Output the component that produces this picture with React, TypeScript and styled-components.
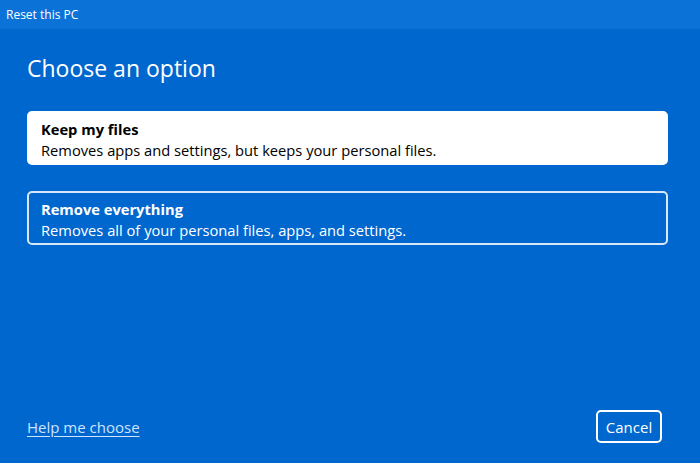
import React from 'react'
import styled, { createGlobalStyle } from 'styled-components'

const GlobalStyle = createGlobalStyle`
  html, body {
    margin: 0;
    padding: 0;
    width: 700px;
    height: 463px;
    overflow: hidden;
    background: #0067cf;
    font-family: 'Open Sans', 'Noto Sans', sans-serif;
  }
`

const Window = styled.div`
  display: flex;
  flex-direction: column;
  width: 700px;
  height: 463px;
  background: #0067cf;
  color: #ffffff;
`

const TitleBar = styled.div`
  height: 29px;
  display: flex;
  align-items: center;
  padding-left: 6px;
  background: #0b72d8;
  font-size: 12px;
`

const Content = styled.div`
  flex: 1;
  display: flex;
  flex-direction: column;
  padding: 24px 32px 20px 27px;
`

const Heading = styled.h1`
  margin: 0 0 28px;
  font-size: 23px;
  font-weight: 400;
  line-height: 30px;
`

const OptionList = styled.div`
  display: flex;
  flex-direction: column;
  gap: 26px;
`

const Option = styled.button<{ $selected?: boolean }>`
  display: flex;
  flex-direction: column;
  align-items: flex-start;
  box-sizing: border-box;
  width: 641px;
  height: 54px;
  padding: 6px 12px;
  border: 2px solid ${(p) => (p.$selected ? '#ffffff' : '#d8e8f8')};
  border-radius: 5px;
  background: ${(p) => (p.$selected ? '#ffffff' : 'transparent')};
  color: ${(p) => (p.$selected ? '#000000' : '#ffffff')};
  font-family: inherit;
  text-align: left;
  cursor: pointer;
`

const OptionTitle = styled.span`
  font-size: 14.7px;
  font-weight: 700;
  line-height: 20px;
`

const OptionText = styled.span`
  font-size: 14.7px;
  line-height: 22px;
`

const Footer = styled.div`
  margin-top: auto;
  display: flex;
  align-items: center;
  justify-content: space-between;
`

const HelpLink = styled.a`
  color: #cfe4ff;
  font-size: 15px;
  text-decoration: underline;
  text-underline-offset: 3px;
  cursor: pointer;
`

const CancelButton = styled.button`
  box-sizing: border-box;
  width: 66px;
  height: 33px;
  margin-right: 6px;
  border: 2px solid #ffffff;
  border-radius: 5px;
  background: transparent;
  color: #ffffff;
  font-family: inherit;
  font-size: 15px;
  cursor: pointer;
`

const options = [
  { title: 'Keep my files', text: 'Removes apps and settings, but keeps your personal files.', selected: true },
  { title: 'Remove everything', text: 'Removes all of your personal files, apps, and settings.', selected: false },
]

export default function App() {
  return (
    <>
      <GlobalStyle />
      <Window>
        <TitleBar>Reset this PC</TitleBar>
        <Content>
          <Heading>Choose an option</Heading>
          <OptionList>
            {options.map((o) => (
              <Option key={o.title} $selected={o.selected}>
                <OptionTitle>{o.title}</OptionTitle>
                <OptionText>{o.text}</OptionText>
              </Option>
            ))}
          </OptionList>
          <Footer>
            <HelpLink>Help me choose</HelpLink>
            <CancelButton>Cancel</CancelButton>
          </Footer>
        </Content>
      </Window>
    </>
  )
}
